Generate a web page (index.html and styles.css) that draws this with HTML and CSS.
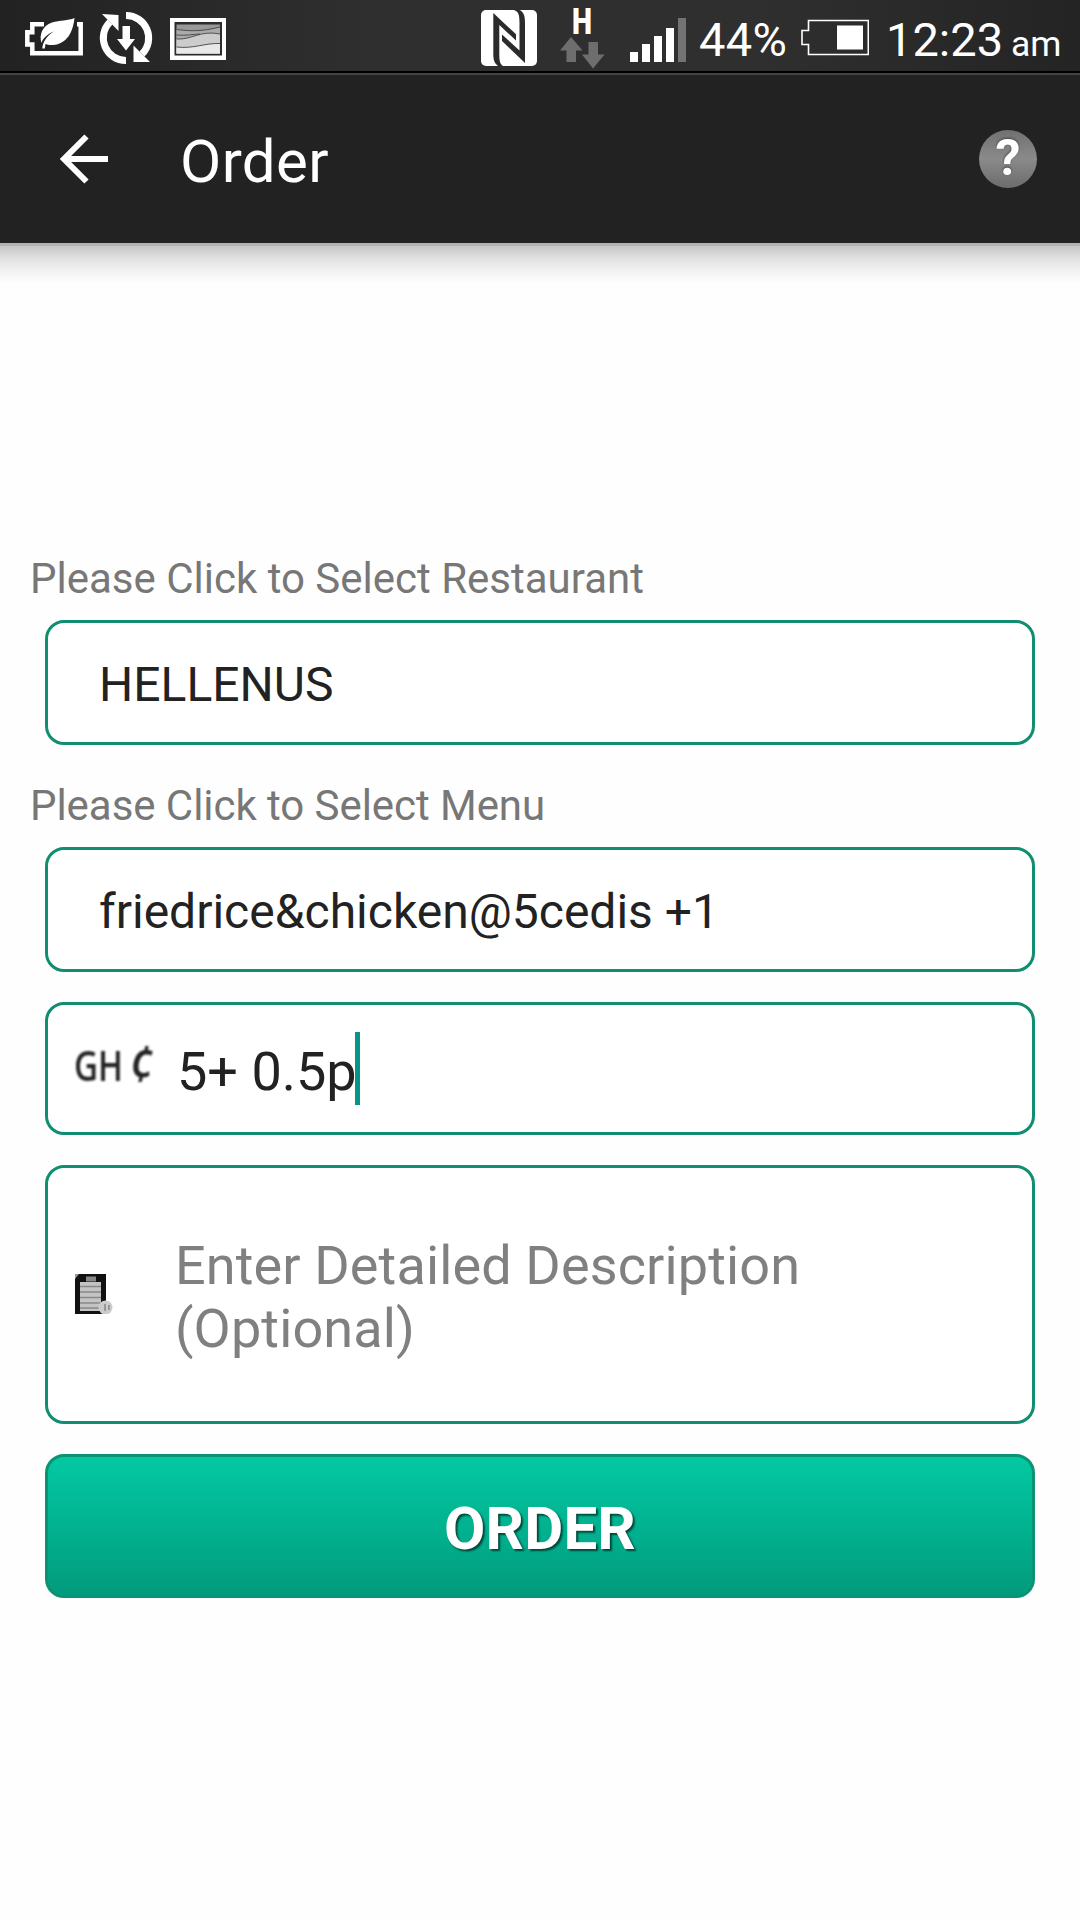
FILE: index.html
```
<!DOCTYPE html>
<html lang="en">
<head>
  <meta charset="UTF-8">
  <meta name="viewport" content="width=device-width, initial-scale=1.0">
  <title>Order</title>
  <link rel="stylesheet" href="styles.css">
</head>
<body>
  <div class="status-bar">
    <div class="status-group">
      <!-- Power saver -->
      <svg width="60" height="72" viewBox="24 0 60 72">
        <path d="M44 24.2H32.3V32.2H27.3V44.6H32.3V53.2H80.7V24.2H77" fill="none" stroke="#fff" stroke-width="4.5"/>
        <path d="M74.500 18C73 32 67 44 53 45C49 45.200 47 44.500 45.500 44L44.800 48.500H42.300C42.500 43 46 36 54 31.500C47 34 42.500 39 41.500 43C39 35 42 26 52 22.500C60 20 68 21 74.500 18Z" fill="#fff"/>
      </svg>
      <!-- Sync -->
      <svg width="58" height="72" viewBox="98 0 58 72">
        <path d="M126 60.500A22.500 22.500 0 0 1 110 22M126 15.500A22.500 22.500 0 0 1 142 54" fill="none" stroke="#fff" stroke-width="7"/>
        <path d="M102 14L118.500 15V31ZM133.500 45.500V62L150 62ZM122.500 26H130V39H135L126 50.500L117 39H122.500Z" fill="#fff"/>
      </svg>
      <!-- Gallery -->
      <svg width="56" height="72" viewBox="170 0 56 72">
        <rect x="170" y="18" width="56" height="42" fill="#fff"/>
        <rect x="174.500" y="22" width="47.500" height="33.500" fill="#2b2b2b"/>
        <rect x="176.500" y="24.500" width="43.500" height="29" fill="#999"/>
        <path d="M176.500 29.500C190 31 200 32 220 27V53.500H176.500Z" fill="#aaa"/>
        <path d="M176.500 39C192 40 200 30 220 34V53.500H176.500Z" fill="#ccc"/>
        <path d="M176.500 47C194 49 204 43 220 43.500V53.500H176.500Z" fill="#e8e8e8"/>
        <path d="M176.500 29.500C190 31 200 32 220 27M176.500 35C186 36 194 34 200 34M176.500 39C192 40 200 30 220 34M176.500 47C194 49 204 43 220 43.500" fill="none" stroke="#444" stroke-width="0.900"/>
      </svg>
    </div>

    <div class="status-group">
      <!-- NFC -->
      <svg width="56" height="72" viewBox="481 0 56 72">
        <rect x="481" y="10" width="56" height="56" rx="5" fill="#fff"/>
        <path d="M493.300 13L516 34.300V40.500L499.300 25V54C499.300 61 500 64 503 66H498C494.500 63 493.300 60 493.300 54Z" fill="#2b2b2b"/>
        <path d="M525 63L502 41V34.500L519.500 50.500V23C519.500 14 518.500 12 514 10H519.500C524 12 525 16 525 23Z" fill="#2b2b2b"/>
      </svg>
      <!-- Mobile data -->
      <svg class="data-icon" width="46" height="72" viewBox="559 0 46 72">
        <text x="572" y="33.500" textLength="20" lengthAdjust="spacingAndGlyphs">H</text>
        <path d="M571 37L582.500 50.500H576V62H566.500V50.500H560ZM588.500 42H598V54.500H604.500L593 68.500L582 54.500H588.500Z"/>
      </svg>
      <!-- Signal -->
      <svg class="signal-icon" width="56" height="72" viewBox="630 0 56 72">
        <path d="M630 52h8v10h-8zM642 44h8v18h-8zM654 36h8v26h-8zM666 28h8v34h-8z" fill="#fff"/>
        <path d="M678 18h8v44h-8z" fill="#737373"/>
      </svg>
      <span class="battery-level">44%</span>
      <!-- Battery -->
      <svg width="68" height="72" viewBox="801 0 68 72">
        <path d="M808.500 20.500H868.300V54.500H808.500V44.500H802V30.500H808.500Z" fill="none" stroke="#fff" stroke-width="1.600"/>
        <rect x="837" y="25.500" width="26" height="24" fill="#fff"/>
      </svg>
      <span class="clock">12:23</span>
      <span class="clock-suffix">am</span>
    </div>
  </div>

  <header>
    <svg class="back" width="50" height="50" viewBox="0 0 50 50">
      <path d="M27.500 2.500L5 25L27.500 47.500M4.500 25H49" fill="none" stroke="#fff" stroke-width="6"/>
    </svg>
    <h1>Order</h1>
    <svg class="help" width="60" height="60" viewBox="0 0 60 60">
      <defs>
        <linearGradient id="help-bg" x1="0" y1="0" x2="0" y2="1">
          <stop offset="0" stop-color="#717171"/>
          <stop offset="0.500" stop-color="#8a8a8a"/>
          <stop offset="1" stop-color="#6c6c6c"/>
        </linearGradient>
      </defs>
      <circle cx="30" cy="30" r="29" fill="url(#help-bg)"/>
      <text x="30" y="46" text-anchor="middle">?</text>
    </svg>
  </header>

  <main>
    <form id="order-form">
      <label>Please Click to Select Restaurant</label>
      <div class="field select">HELLENUS</div>

      <label class="menu-label">Please Click to Select Menu</label>
      <div class="field select">friedrice&amp;chicken@5cedis +1</div>

      <div class="field amount">
        <svg class="currency" width="82" height="80" viewBox="0 0 82 80">
          <text x="0" y="52" textLength="49" lengthAdjust="spacingAndGlyphs">GH</text>
          <text class="cedi" x="55" y="53" textLength="25" lengthAdjust="spacingAndGlyphs">¢</text>
        </svg>
        <span class="amount-value">5+ 0.5p</span>
        <span class="caret"></span>
      </div>

      <div class="field description">
        <svg class="clipboard" width="40" height="40" viewBox="0 0 40 40">
          <path d="M3 0H31V40H0V3Z" fill="#111"/>
          <path d="M0 0H4L0 5Z" fill="#999"/>
          <rect x="5" y="8" width="21" height="29" fill="#c4c4c4"/>
          <rect x="11" y="2.500" width="10" height="5" fill="#888"/>
          <path d="M5 12.500H26M5 18H26M5 23.500H26M5 29H26M5 34H24" stroke="#888" stroke-width="1.500"/>
          <circle cx="30.500" cy="33.500" r="7" fill="#ccc"/>
          <path d="M30 30V37M34 31V36" stroke="#888" stroke-width="1.500"/>
        </svg>
        <span class="placeholder">Enter Detailed Description (Optional)</span>
      </div>

      <button type="submit">ORDER</button>
    </form>
  </main>
</body>
</html>
```
FILE: styles.css
```
/* General Styles */
* {
  box-sizing: border-box;
}

body {
  margin: 0;
  height: 1920px;
  font-family: Roboto, sans-serif;
  background-color: #fefefe;
  color: #222;
}

svg {
  display: block;
  flex: none;
}

/* Status Bar */
.status-bar {
  height: 75px;
  display: flex;
  align-items: flex-start;
  justify-content: space-between;
  padding: 0 19px 0 24px;
  background: linear-gradient(#000, #000) 0 71px / 100% 2px no-repeat,
    linear-gradient(#444, #444) 0 73px / 100% 2px no-repeat,
    linear-gradient(90deg, #222, #2f2f2f 35%, #2f2f2f 70%, #242424);
  color: white;
}

.status-group {
  display: flex;
}

.status-group svg + svg {
  margin-left: 14px;
}

.status-group .data-icon {
  margin-left: 22px;
  fill: #6e6e6e;
}

.data-icon text {
  font-size: 36.5px;
  font-weight: 900;
  fill: white;
}

.status-group .signal-icon {
  margin-left: 25px;
}

.status-group span {
  line-height: 72px;
  padding-top: 4px;
  white-space: nowrap;
}

.battery-level {
  width: 102px;
  margin-left: 13px;
  font-size: 47px;
  letter-spacing: 0.3px;
}

.clock {
  width: 125px;
  margin-left: 17px;
  font-size: 47px;
}

.status-group .clock-suffix {
  width: 50px;
  font-size: 35.5px;
  padding-top: 8px;
}

/* Header */
header {
  height: 168px;
  display: flex;
  align-items: center;
  padding: 0 42px 0 59px;
  background-color: #222;
  color: white;
}

header h1 {
  flex: 1;
  margin: 0 0 0 71px;
  padding-top: 4px;
  font-size: 60px;
  font-weight: normal;
  letter-spacing: 0.4px;
}

.help text {
  font-size: 50px;
  font-weight: bold;
  fill: white;
  filter: drop-shadow(0 -1px 1px #444);
}

/* Order Form */
main {
  height: 1677px;
  padding: 311px 45px 0;
  background: linear-gradient(#b2b2b2, #b2b2b2) 0 0 / 100% 3px no-repeat,
    linear-gradient(#c6c6c6, #e2e2e2 35%, #f5f5f5 75%, #fefefe) 0 3px / 100% 37px no-repeat;
}

form label {
  display: block;
  height: 50px;
  margin: 0 0 16px -15px;
  font-size: 42px;
  line-height: 50px;
  color: #777;
}

form .menu-label {
  margin-top: 36px;
  letter-spacing: -0.05px;
}

.field {
  display: flex;
  align-items: center;
  border: 3px solid #118e70;
  border-radius: 19px;
  background-color: white;
}

.select {
  height: 125px;
  padding: 4px 51px 0;
  font-size: 48px;
}

.amount {
  height: 133px;
  margin-top: 30px;
  padding-left: 26px;
  font-size: 54px;
}

.currency {
  font-family: "Open Sans", sans-serif;
  font-size: 42px;
  font-weight: 600;
  fill: #222;
  filter: blur(0.8px);
}

.cedi {
  font-size: 48px;
  font-style: italic;
}

.amount-value {
  width: 178px;
  margin-left: 21px;
  padding-top: 6px;
  white-space: nowrap;
}

.caret {
  width: 5px;
  height: 73px;
  background-color: #069688;
}

.description {
  height: 259px;
  margin-top: 30px;
  padding-left: 27px;
}

.clipboard {
  margin-top: -2px;
  filter: blur(0.6px);
}

.placeholder {
  width: 700px;
  margin-left: 60px;
  padding-top: 5px;
  font-size: 54px;
  line-height: 63px;
  letter-spacing: 0.13px;
  color: #808080;
}

form button {
  display: block;
  width: 100%;
  height: 144px;
  margin-top: 30px;
  padding: 5px 0 0;
  border: 3px solid #0b9372;
  border-radius: 19px;
  background: linear-gradient(#03c9a3, #019b7d);
  color: white;
  font-family: inherit;
  font-size: 60px;
  font-weight: bold;
  letter-spacing: 0.2px;
  text-shadow: 2px 2px 2px rgba(0, 0, 0, 0.6);
}
```
